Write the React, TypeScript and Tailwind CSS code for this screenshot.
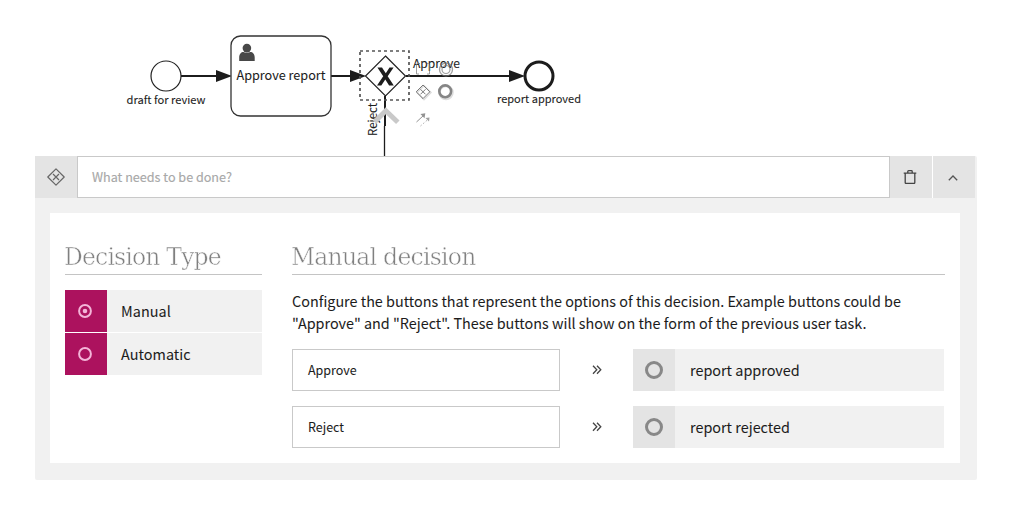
import React from "react";

const SANS = "font-['Noto_Sans_CJK_SC','Noto_Sans',sans-serif]";

function Heading({ children, className }: { children: React.ReactNode; className: string }) {
  return (
    <h2 className="h-[47px] border-b border-[#c4c4c4] pt-[12px] leading-[34px] whitespace-nowrap text-[#808080]">
      <span
        className={`-ml-px inline-block font-['DejaVu_Serif',serif] text-[23.5px] will-change-transform [-webkit-text-stroke:0.5px_white] ${className}`}
      >
        {children}
      </span>
    </h2>
  );
}

function GatewayIcon({ className }: { className: string }) {
  return (
    <svg viewBox="0 0 18 18" fill="none" stroke="currentColor" className={className}>
      <path d="M9 .8 17.2 9 9 17.2 .8 9Z" strokeWidth="1.2" strokeLinejoin="round" />
      <path d="m6 6 6 6m0-6-6 6" strokeWidth="1.2" />
    </svg>
  );
}

function Choice({ label, checked }: { label: string; checked?: boolean }) {
  return (
    <label className="flex h-[42px] bg-[#f1f1f1]">
      <span className="flex w-[42px] items-center justify-center bg-[#ac125e] pr-[2px]">
        <svg viewBox="0 0 14 14" className="size-[14px]">
          <circle cx="7" cy="7" r="5.9" fill="none" stroke="#f3b5d8" strokeWidth="2" />
          {checked && <circle cx="7" cy="7" r="2.3" fill="#f3b5d8" />}
        </svg>
      </span>
      <span className="pl-[14px] text-[14.4px] leading-[42px] tracking-[0.05px] [-webkit-text-stroke:0.05px]">
        {label}
      </span>
    </label>
  );
}

function Option({ label, target }: { label: string; target: string }) {
  return (
    <div className="flex h-[42px] items-stretch">
      <div className="w-[268px] border border-[#c9c9c9] pl-[15px] text-[12.5px] leading-[40px] [-webkit-text-stroke:0.05px]">
        {label}
      </div>
      <div className="flex w-[73px] items-center justify-center">
        <svg viewBox="0 0 10 10" className="size-[10px]" fill="none" stroke="#444" strokeWidth="1.3">
          <path d="m1 .8 3.800 4L1 8.800M5 .8l3.800 4L5 8.800" />
        </svg>
      </div>
      <div className="flex w-[311px] bg-[#f1f1f1]">
        <div className="flex w-[42px] items-center justify-center bg-[#e4e4e4]">
          <div className="size-[18px] rounded-full border-[3px] border-[#888]" />
        </div>
        <div className="pl-[15px] text-[14.4px] leading-[42px] [-webkit-text-stroke:0.05px]">{target}</div>
      </div>
    </div>
  );
}

function Diagram() {
  return (
    <svg width="1024" height="156" viewBox="0 0 1024 156" fill="none" className={`block ${SANS}`}>
      <g stroke="#1c1c1c" strokeWidth="2">
        <path d="M181 76H218M331 76H352M406 76H512" />
        <path d="M385 96V126" />
        <path d="M384.500 126V156" strokeWidth="1.300" />
      </g>
      <g fill="#1c1c1c">
        <path d="M216 70 232 76 216 82ZM350 70 366 76 350 82ZM509 70 525 76 509 82Z" />
      </g>
      <circle cx="166" cy="76" r="15" stroke="#222" strokeWidth="1.200" fill="white" />
      <rect x="231" y="36" width="100" height="80" rx="9.500" stroke="#333" strokeWidth="1.300" fill="white" />
      <g fill="#484848">
        <path d="M239.200 61v-3.600c0-3.500 2-5.500 4.300-5.500 1 1 5.600 1 6.700 0 2.500 0 4.500 2 4.500 5.500V61Z" />
        <circle cx="246.900" cy="48.100" r="4.300" />
      </g>
      <path d="m385.500 56 20 20-20 20-20-20Z" stroke="#222" strokeWidth="1.200" fill="white" />
      <path d="M377.400 67.500h4.600l3.800 5.700 3.700-5.700h4.100l-5.900 8.700 6.100 9.300h-4.700l-3.800-6-4 6h-4.300l6.200-9.200Z" fill="#1c1c1c" />
      <rect x="360" y="51" width="49" height="49" stroke="#555" strokeWidth="1.700" strokeDasharray="3 3" />
      <circle cx="539" cy="76" r="14" stroke="#1c1c1c" strokeWidth="3" fill="white" />

      <g fill="#1c1c1c" stroke="#1c1c1c" strokeWidth=".08">
        <text x="126.500" y="104" fontSize="11" textLength="79" lengthAdjust="spacingAndGlyphs">draft for review</text>
        <text x="236.500" y="80" fontSize="13" textLength="89" lengthAdjust="spacingAndGlyphs">Approve report</text>
        <text x="497" y="103" fontSize="11" textLength="84" lengthAdjust="spacingAndGlyphs">report approved</text>
        <text x="413" y="68" fontSize="11.500" textLength="47" lengthAdjust="spacingAndGlyphs">Approve</text>
        <text transform="translate(377 136) rotate(-90)" fontSize="11.500" textLength="33" lengthAdjust="spacingAndGlyphs">Reject</text>
      </g>

      <path d="m374.500 122 11.300-11.200 12 11.500" stroke="#c9c9c9" strokeWidth="5" />

      <g stroke="#777">
        <g opacity=".7">
          <path d="M420 63.500H417.500Q416.500 63.500 416.500 64.500V74H419M427 63.500H428.500Q429.500 63.500 429.500 64.500V74H427" />
          <circle cx="446" cy="69.500" r="6.500" strokeWidth="1.300" />
          <circle cx="446" cy="69.500" r="4" strokeWidth="1.200" />
        </g>
        <circle cx="446" cy="92.500" r="6.500" stroke="#ddd" strokeWidth="2.500" />
        <circle cx="445.200" cy="91.300" r="5.900" stroke="#858585" strokeWidth="2.600" />
        <path d="m424 85.600 7 7-7 7-7-7Z" stroke="#ddd" strokeWidth="1.500" />
        <path d="m423 85 6.800 6.800-6.800 6.800-6.800-6.800Z" />
        <path d="m420.500 89.300 5 5m0-5-5 5" />
        <g opacity=".8">
          <path d="m416.500 122 7-6.500" />
          <path d="m420.500 114 4.800-.7-.8 5Z" fill="#777" stroke="none" />
          <path d="m420.500 126 8-7" stroke="#999" strokeDasharray="1.500 2" />
          <path d="m425.500 118 4-.5-.5 4Z" fill="#888" stroke="none" />
        </g>
      </g>
    </svg>
  );
}

export default function App() {
  return (
    <div className={`h-[515px] w-[1024px] overflow-hidden bg-white text-[#1c1c1c] ${SANS}`}>
      <Diagram />
      <section className="ml-[35px] h-[324px] w-[942px] rounded-[2px] bg-[#f1f1f1]">
        <header className="flex h-[42px] w-[940px]">
          <div className="flex w-[42px] items-center justify-center bg-[#e4e4e4] pr-px text-[#666]">
            <GatewayIcon className="size-[18px]" />
          </div>
          <div className="flex-1 border border-[#c9c9c9] bg-white pl-[14px] text-[12.6px] leading-[40px] text-[#a8a8a8] [-webkit-text-stroke:0.15px]">
            What needs to be done?
          </div>
          <button className="flex w-[42px] items-center justify-center bg-[#e4e4e4] pr-[2px]">
            <svg viewBox="0 0 14 14" className="size-[14px]" fill="none" stroke="#444" strokeWidth="1.300">
              <path d="M.7 3.200h12.600M4.800 3V1.500q0-.8.800-.8h2.800q.8 0 .8.800V3M2.200 3.500v9q0 1 1 1h7.600q1 0 1-1v-9" />
            </svg>
          </button>
          <button className="ml-px flex w-[42px] items-center justify-center bg-[#e4e4e4] pr-[2px] shadow-[-1px_0_0_#fff]">
            <svg viewBox="0 0 10 6" className="mt-[2px] h-[6px] w-[10px]" fill="none" stroke="#555" strokeWidth="1.300">
              <path d="m.8 5.200 4.200-4.200 4.200 4.200" />
            </svg>
          </button>
        </header>
        <div className="mt-[15px] ml-[15px] flex h-[250px] w-[910px] gap-[30px] bg-white px-[15px] pt-[15px]">
          <div className="w-[197px]">
            <Heading className="tracking-[-0.83px]">Decision Type</Heading>
            <div className="mt-[15px] flex flex-col gap-px">
              <Choice label="Manual" checked />
              <Choice label="Automatic" />
            </div>
          </div>
          <div className="w-[653px]">
            <Heading className="tracking-[-0.75px]">Manual decision</Heading>
            <p className="mt-[15px] text-[14.39px] leading-[22px] whitespace-nowrap [-webkit-text-stroke:0.05px]">
              Configure the buttons that represent the options of this decision. Example buttons could be
              <br />
              "Approve" and "Reject". These buttons will show on the form of the previous user task.
            </p>
            <div className="mt-[15px] flex flex-col gap-[15px]">
              <Option label="Approve" target="report approved" />
              <Option label="Reject" target="report rejected" />
            </div>
          </div>
        </div>
      </section>
    </div>
  );
}
